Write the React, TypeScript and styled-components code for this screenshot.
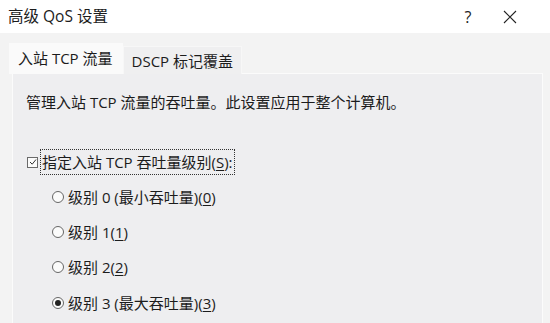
import React from "react";
import styled, { createGlobalStyle } from "styled-components";

const Global = createGlobalStyle`
  html, body { margin: 0; padding: 0; }
  body {
    width: 550px;
    height: 323px;
    overflow: hidden;
    background: #f3f3f3;
    font-family: "Open Sans", "Noto Sans CJK SC", sans-serif;
    color: #1c1c1c;
  }
`;

const Window = styled.div`
  width: 550px;
  height: 323px;
  display: flex;
  flex-direction: column;
  background: #f3f3f3;
`;

const TitleBar = styled.div`
  height: 33px;
  flex: none;
  background: #ffffff;
  display: flex;
  align-items: center;
  padding-left: 8px;
  padding-right: 18px;
  box-sizing: border-box;
`;

const Title = styled.div`
  font-size: 15.5px;
  line-height: 20px;
  flex: 1;
  margin-top: -2px;
`;

const TitleButton = styled.div<{ $w: number }>`
  width: ${(p) => p.$w}px;
  height: 33px;
  display: flex;
  align-items: center;
  justify-content: center;
  font-size: 16px;
  color: #222;
`;

const Body = styled.div`
  flex: 1;
  display: flex;
  flex-direction: column;
  padding: 11px 7px 0 12px;
  min-height: 0;
`;

const TabRow = styled.div`
  display: flex;
  align-items: flex-end;
  margin-left: -3px;
  height: 30px;
  position: relative;
  z-index: 1;
  margin-bottom: -1px;
`;

const Tab = styled.div<{ $active?: boolean }>`
  box-sizing: border-box;
  height: ${(p) => (p.$active ? 31 : 28)}px;
  padding: 0 ${(p) => (p.$active ? 9 : 8)}px 0 8px;
  display: flex;
  align-items: center;
  font-size: 15px;
  line-height: 20px;
  background: ${(p) => (p.$active ? "#fafafa" : "#efeff0")};
  border: 1px solid ${(p) => (p.$active ? "#fafafa" : "#f7f7f7")};
  border-bottom: none;
  padding-bottom: ${(p) => (p.$active ? 2 : 0)}px;
`;

const Panel = styled.div`
  flex: 1;
  width: 531px;
  box-sizing: border-box;
  background: #eeeef0;
  border: 1px solid #fbfbfb;
  border-bottom: none;
  padding: 18px 0 0 13px;
  display: flex;
  flex-direction: column;
`;

const Description = styled.div`
  font-size: 15px;
  line-height: 20px;
  height: 20px;
`;

const CheckRow = styled.div`
  margin-top: 37px;
  height: 26px;
  display: flex;
  align-items: center;
  margin-left: 1px;
`;

const CheckBox = styled.span`
  width: 9px;
  height: 9px;
  border: 1px solid #6a6a6a;
  background: #fbfbfb;
  display: flex;
  align-items: center;
  justify-content: center;
  margin-right: 2px;
`;

const FocusLabel = styled.span`
  font-size: 15px;
  line-height: 20px;
  padding: 2px 1px;
  border: 1px dotted #333;
`;

const RadioList = styled.div`
  margin-top: 4px;
  display: flex;
  flex-direction: column;
`;

const RadioRow = styled.div`
  height: 35.3px;
  display: flex;
  align-items: center;
  padding-left: 26px;
  font-size: 15px;
  line-height: 20px;
`;

const RadioCircle = styled.span<{ $on?: boolean }>`
  width: 10px;
  height: 10px;
  border-radius: 50%;
  border: 1px solid #666;
  background: #fbfbfb;
  display: flex;
  align-items: center;
  justify-content: center;
  margin-right: 4px;
  &::after {
    content: "";
    display: ${(p) => (p.$on ? "block" : "none")};
    width: 6px;
    height: 6px;
    border-radius: 50%;
    background: #222;
  }
`;

const U = styled.span`
  text-decoration: underline;
  text-underline-offset: 2px;
  text-decoration-thickness: 1px;
`;

const levels: { label: string; key: string; on?: boolean }[] = [
  { label: "级别 0 (最小吞吐量)", key: "0" },
  { label: "级别 1", key: "1" },
  { label: "级别 2", key: "2" },
  { label: "级别 3 (最大吞吐量)", key: "3", on: true },
];

export default function App() {
  return (
    <Window>
      <Global />
      <TitleBar>
        <Title>高级 QoS 设置</Title>
        <TitleButton $w={40}>?</TitleButton>
        <TitleButton $w={44}>
          <svg width="14" height="14" viewBox="0 0 14 14">
            <path d="M1 1 L13 13 M13 1 L1 13" stroke="#222" strokeWidth="1.1" fill="none" />
          </svg>
        </TitleButton>
      </TitleBar>
      <Body>
        <TabRow>
          <Tab $active>入站 TCP 流量</Tab>
          <Tab>DSCP 标记覆盖</Tab>
        </TabRow>
        <Panel>
          <Description>管理入站 TCP 流量的吞吐量。此设置应用于整个计算机。</Description>
          <CheckRow>
            <CheckBox>
              <svg width="8" height="8" viewBox="0 0 8 8">
                <path d="M1 4 L3.2 6.2 L7 1.5" stroke="#333" strokeWidth="1" fill="none" />
              </svg>
            </CheckBox>
            <FocusLabel>
              指定入站 TCP 吞吐量级别(<U>S</U>):
            </FocusLabel>
          </CheckRow>
          <RadioList>
            {levels.map((l) => (
              <RadioRow key={l.key}>
                <RadioCircle $on={l.on} />
                {l.label}(<U>{l.key}</U>)
              </RadioRow>
            ))}
          </RadioList>
        </Panel>
      </Body>
    </Window>
  );
}
